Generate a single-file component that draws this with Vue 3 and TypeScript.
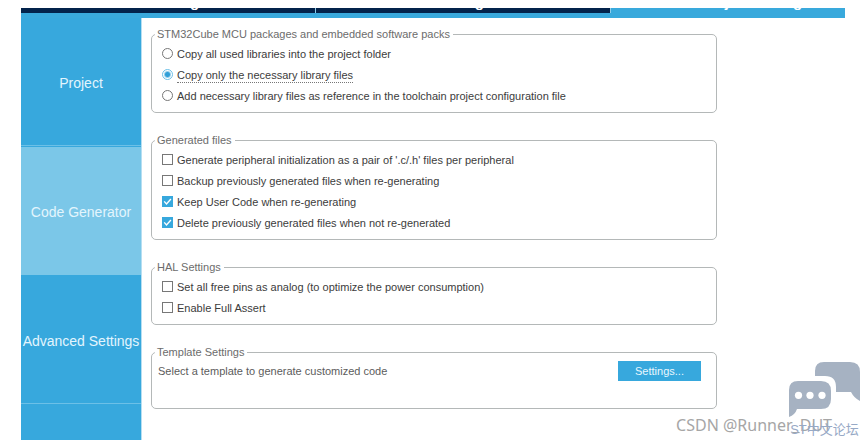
<script setup lang="ts">
import { ref } from 'vue'

interface CheckOption {
  id: string
  label: string
  checked: boolean
}

const tabs: string[] = ['Pinout & Configuration', 'Clock Configuration', 'Project Manager']
const activeTab = ref<string>('Project Manager')

const sections: string[] = ['Project', 'Code Generator', 'Advanced Settings']
const activeSection = ref<string>('Code Generator')

const copyModes: { id: string; label: string }[] = [
  { id: 'all', label: 'Copy all used libraries into the project folder' },
  { id: 'necessary', label: 'Copy only the necessary library files' },
  {
    id: 'reference',
    label: 'Add necessary library files as reference in the toolchain project configuration file',
  },
]
const copyMode = ref<string>('necessary')

const generatedFiles = ref<CheckOption[]>([
  {
    id: 'pair',
    label: "Generate peripheral initialization as a pair of '.c/.h' files per peripheral",
    checked: false,
  },
  { id: 'backup', label: 'Backup previously generated files when re-generating', checked: false },
  { id: 'keep', label: 'Keep User Code when re-generating', checked: true },
  { id: 'delete', label: 'Delete previously generated files when not re-generated', checked: true },
])

const halSettings = ref<CheckOption[]>([
  {
    id: 'analog',
    label: 'Set all free pins as analog (to optimize the power consumption)',
    checked: false,
  },
  { id: 'assert', label: 'Enable Full Assert', checked: false },
])
</script>

<template>
  <div class="page">
    <div class="window">
      <nav class="tabs">
        <button
          v-for="tab in tabs"
          :key="tab"
          type="button"
          class="tab"
          :class="{ active: tab === activeTab }"
          @click="activeTab = tab"
        >
          {{ tab }}
        </button>
      </nav>

      <div class="body">
        <nav class="sidebar">
          <button
            v-for="section in sections"
            :key="section"
            type="button"
            class="section"
            :class="{ active: section === activeSection }"
            @click="activeSection = section"
          >
            {{ section }}
          </button>
        </nav>

        <main class="content">
          <fieldset class="group">
            <legend>STM32Cube MCU packages and embedded software packs</legend>
            <label v-for="mode in copyModes" :key="mode.id" class="option">
              <input v-model="copyMode" type="radio" name="copy-mode" :value="mode.id" />
              <span :class="{ focused: mode.id === copyMode }">{{ mode.label }}</span>
            </label>
          </fieldset>

          <fieldset class="group">
            <legend>Generated files</legend>
            <label v-for="item in generatedFiles" :key="item.id" class="option">
              <span class="check">
                <input v-model="item.checked" type="checkbox" />
                <svg v-if="item.checked" viewBox="0 0 11 11" aria-hidden="true">
                  <path d="M2.2 5.4 4.5 7.9 8.9 3" />
                </svg>
              </span>
              <span>{{ item.label }}</span>
            </label>
          </fieldset>

          <fieldset class="group">
            <legend>HAL Settings</legend>
            <label v-for="item in halSettings" :key="item.id" class="option">
              <span class="check">
                <input v-model="item.checked" type="checkbox" />
                <svg v-if="item.checked" viewBox="0 0 11 11" aria-hidden="true">
                  <path d="M2.2 5.4 4.5 7.9 8.9 3" />
                </svg>
              </span>
              <span>{{ item.label }}</span>
            </label>
          </fieldset>

          <fieldset class="group template">
            <legend>Template Settings</legend>
            <div class="template-row">
              <span>Select a template to generate customized code</span>
              <button type="button" class="settings">Settings...</button>
            </div>
          </fieldset>
        </main>
      </div>
    </div>

    <div class="author-mark">CSDN @Runner_DUT</div>
    <div class="forum-mark">
      <svg viewBox="0 0 71 56" aria-hidden="true">
        <path
          d="M26 14V9Q26 0 35 0H61Q71 0 71 10V39Q65 36 62 30H47V25Q47 14 36 14Z"
        />
        <path
          d="M9 19H32Q42 19 42 29V37Q42 47 32 47H8Q6 53 0 55V28Q0 19 9 19Z"
        />
        <circle class="dot" cx="9.500" cy="33.300" r="3.600" />
        <circle class="dot" cx="21" cy="33.300" r="3.600" />
        <circle class="dot" cx="33" cy="33.300" r="3.600" />
      </svg>
      <span>ST中文论坛</span>
    </div>
  </div>
</template>

<style>
body {
  background: #fff;
}
</style>

<style scoped>
.page {
  position: relative;
  box-sizing: border-box;
  min-height: 100vh;
  padding: 8px 23px 5px 21px;
  display: flex;
  font-family: 'Liberation Sans', Arial, sans-serif;
  font-size: 11px;
  line-height: 14px;
  color: #3c3c3c;
}

.window {
  flex: 1;
  min-width: 0;
  display: flex;
  flex-direction: column;
}

.tabs {
  display: grid;
  grid-template-columns: repeat(3, 294px);
  align-content: end;
  gap: 1px;
  height: 5px;
  overflow: hidden;
  background: #8fcdea;
  border-bottom: 5px solid #39a9dc;
}

.tab {
  height: 20px;
  padding: 0 0 3px;
  border: 0;
  background: #03234b;
  color: #fff;
  font-family: inherit;
  font-size: 15px;
  font-weight: bold;
  line-height: 17px;
  white-space: nowrap;
}

.tab.active {
  background: #39a9dc;
}

.body {
  flex: 1;
  display: flex;
}

.sidebar {
  display: grid;
  grid-auto-rows: 128px;
  align-content: start;
  gap: 1px;
  width: 120px;
  background: #37a8dd;
  border-right: 1px solid #b5def2;
}

.section {
  padding: 2px 0 0;
  border: 0;
  border-bottom: 1px solid #6cc0e7;
  background: #37a8dd;
  color: #e3f5fd;
  font-family: inherit;
  font-size: 14px;
  line-height: 16px;
  white-space: nowrap;
}

.section.active {
  background: #7bc7e8;
  border-bottom-color: #7bc7e8;
}

.content {
  flex: 0 1 566px;
  min-width: 0;
  display: flex;
  flex-direction: column;
  gap: 20px;
  padding: 9px 0 0 9px;
}

.group {
  min-width: 0;
  margin: 0;
  padding: 2px 10px 6px;
  border: 1px solid #b4b8b8;
  border-radius: 5px;
}

.group legend {
  margin-left: -7px;
  padding: 0 3px 0 2px;
  color: #6c6c6c;
}

.option {
  display: flex;
  align-items: center;
  gap: 4px;
  height: 21px;
}

.focused {
  border-bottom: 1px dotted #777;
  margin-bottom: -1px;
}

.option input {
  appearance: none;
  flex: none;
  box-sizing: border-box;
  width: 11px;
  height: 11px;
  margin: 0;
  border: 1px solid #777;
  background: #fff;
}

.option input[type='radio'] {
  border-radius: 50%;
}

.option input[type='radio']:checked {
  border-color: #6cc0e7;
  background: radial-gradient(circle, #2f9fd8 0 2px, #fff 4px);
}

.check {
  display: grid;
  flex: none;
}

.check > * {
  grid-area: 1 / 1;
}

.check input:checked {
  border-color: #37a8dd;
  background: #37a8dd;
}

.check svg {
  width: 11px;
  height: 11px;
  pointer-events: none;
  fill: none;
  stroke: #fff;
  stroke-width: 1.4;
}

.template {
  min-height: 64px;
  box-sizing: border-box;
  padding: 2px 15px 6px 6px;
}

.template legend {
  margin-left: -3px;
}

.template-row {
  display: flex;
  align-items: center;
  justify-content: space-between;
  color: #5c5c5c;
}

.settings {
  width: 83px;
  height: 20px;
  padding: 0;
  border: 0;
  background: #37a8dd;
  color: #e9f7fd;
  font: inherit;
}

.author-mark {
  position: absolute;
  right: 36px;
  bottom: 9px;
  color: #a6a6a6;
  font-family: 'Noto Sans', sans-serif;
  font-size: 16px;
  line-height: 22px;
}

.forum-mark {
  position: absolute;
  right: 8px;
  bottom: 7px;
  display: flex;
  flex-direction: column;
  align-items: center;
  gap: 3px;
  color: #97a9c6;
  font-family: 'Liberation Sans', 'Noto Sans CJK SC', sans-serif;
  font-size: 13px;
  line-height: 17px;
}

.forum-mark svg {
  width: 71px;
  height: 56px;
  fill: #a6b2c2;
}

.forum-mark .dot {
  fill: #fff;
}
</style>
